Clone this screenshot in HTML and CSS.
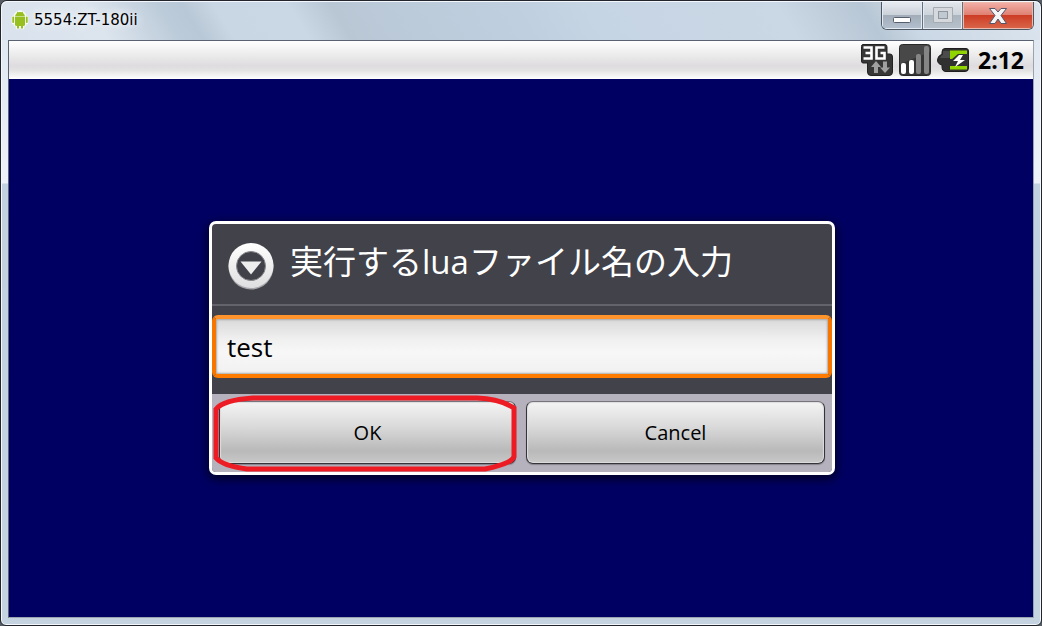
FILE: index.html
```html
<!DOCTYPE html>
<html lang="ja">
<head>
<meta charset="utf-8">
<title>5554:ZT-180ii</title>
<link rel="stylesheet" href="styles.css">
</head>
<body>
<div class="window">
  <header class="titlebar">
    <svg class="app-icon" viewBox="0 0 18 20" aria-hidden="true">
      <g fill="#f8fbf4" stroke="#f8fbf4" stroke-width="2.400" stroke-linejoin="round">
        <path d="M6 2.500Q9 .5 12 2.500L14 5V15H12V18H10.500V15.500H7.500V18H6V15H4V5Z"/>
        <path d="M2 7H3V13H2ZM15 7H16V13H15Z"/>
      </g>
      <g fill="#97bf20">
        <path d="M6 1.500 7 2.300Q9 1.800 11 2.300L12 1.500 12 3Q14 4.500 14 6.500H4Q4 4.500 6 3Z"/>
        <path d="M4 7H14V15Q14 16 12 16V18.500H10V16H8V18.500H6V16Q4 16 4 15Z"/>
        <rect x="1.300" y="6.500" width="1.800" height="6.500" rx=".9"/><rect x="14.900" y="6.500" width="1.800" height="6.500" rx=".9"/>
      </g>
    </svg>
    <h1 class="window-title">5554:ZT-180ii</h1>
    <div class="caption-buttons">
      <button class="caption minimize" type="button" aria-label="Minimize">
        <svg width="20" height="8" viewBox="0 0 20 8"><rect x="1.500" y="1.500" width="17" height="5" rx="1" fill="#fff" stroke="#565d6c"/></svg>
      </button>
      <button class="caption maximize" type="button" aria-label="Maximize" disabled>
        <svg width="20" height="17" viewBox="0 0 20 17"><path d="M.5.500H19.500V15.500H.5ZM5.500 4.500V11.500H14.500V4.500Z" fill="#d5d9de" fill-rule="evenodd" stroke="#a6abb2"/><rect x="5.500" y="4.500" width="9" height="7" fill="#c0c8d0" stroke="#8f969f"/></svg>
      </button>
      <button class="caption close" type="button" aria-label="Close">
        <svg width="20" height="16" viewBox="0 0 20 16"><path d="M1.500.500H7L10 4 13 .5H18.500L13 7.500 18.500 15.500H13L10 11 7 15.500H1.500L7 7.500Z" fill="#f5f5f6" stroke="#53566a" stroke-linejoin="round"/></svg>
      </button>
    </div>
  </header>
  <main class="screen">
    <div class="statusbar">
      <svg width="32" height="32" viewBox="0 0 32 32" role="img" aria-label="3G">
        <path d="M2 .5H24Q26 .5 26 3V10H29Q31.500 10 31.500 13V28Q31.500 31.500 28 31.500H10Q6.500 31.500 6.500 28V19H2Q.5 19 .5 17V2.500Q.5.500 2 .5Z" fill="#363636" stroke="#222"/>
        <path d="M2.500 3.500H10.500V14.500H2.500M4.500 9H10.500M23.500 3.500H15.500V14.500H23.500V9H19.500" fill="none" stroke="#fff" stroke-width="2.600"/>
        <path d="M15 17 20 23H17V29H13V23H10ZM24 29 19 23.500H22V17.500H26V23.500H29Z" fill="#a0a0a0"/>
      </svg>
      <svg width="32" height="32" viewBox="0 0 32 32" role="img" aria-label="Signal">
        <rect x=".5" y=".5" width="31" height="31" rx="3" fill="#484848" stroke="#292929"/>
        <path d="M1 31V20L31 8V29L29 31Z" fill="#353535"/>
        <rect x="2" y="19" width="5" height="11" rx="2" fill="#fff"/><rect x="10" y="16" width="5" height="14" rx="2" fill="#fff"/>
        <rect x="17" y="10" width="5" height="20" rx="2" fill="#858585"/><rect x="25" y="2" width="5" height="28" rx="2" fill="#858585"/>
      </svg>
      <svg width="32" height="24" viewBox="0 0 32 24" role="img" aria-label="Battery charging">
        <path d="M8 .5H29Q31.500.500 31.500 3V20Q31.500 23.500 28 23.500H9Q5 23.500 5 19V17Q.5 16 .5 12T5 6V4Q5 .5 8 .5Z" fill="#303030" stroke="#1e1e1e"/>
        <path d="M6 3H13V10H3Q4 7 6 7Z" fill="#4b4b4b"/>
        <path d="M13 2.500H30V6H21L15 11H13ZM14 18H30V21.500H13V18Z" fill="#91d500"/>
        <path d="M22 7 16 13H21L18 19 28 12H23L26 7Z" fill="#fff"/>
      </svg>
      <time class="clock">2:12</time>
    </div>
    <div class="stage">
      <form class="dialog" role="dialog" aria-labelledby="dialog-title">
        <div class="dialog-head">
          <svg width="48" height="48" viewBox="0 0 48 48" aria-hidden="true">
            <defs><linearGradient id="ring" x2="0" y2="1"><stop stop-color="#fff"/><stop offset="1" stop-color="#dedee0"/></linearGradient></defs>
            <circle cx="24" cy="25" r="22.500" fill="#a5a5aa"/>
            <circle cx="24" cy="23.500" r="22.500" fill="url(#ring)"/>
            <circle cx="24" cy="24" r="14.500" fill="#41414a" stroke="#88888d"/>
            <path d="M13.500 19.500H34.500L24 32.500Z" fill="#ededee"/>
          </svg>
          <h2 class="dialog-title" id="dialog-title">実行するluaファイル名の入力</h2>
        </div>
        <div class="dialog-body">
          <input class="filename" type="text" value="test" aria-labelledby="dialog-title">
        </div>
        <div class="dialog-actions">
          <div class="marked">
            <button class="action" type="button">OK</button>
            <svg class="marker" viewBox="0 0 304 76" preserveAspectRatio="none" aria-hidden="true">
              <path d="M40 3H264Q288 4 301 13V61Q298 68 272 73H34Q10 70 3 62V14Q10 5 40 3Z" fill="none" stroke="#ed1c24" stroke-width="5"/>
            </svg>
          </div>
          <button class="action" type="button">Cancel</button>
        </div>
      </form>
    </div>
  </main>
</div>
</body>
</html>
```
FILE: styles.css
```css
* { box-sizing: border-box; }

body {
  margin: 0;
  background: #555b63;
  font-family: "Open Sans", "Noto Sans", "Noto Sans CJK JP", sans-serif;
}

.window {
  display: flex;
  flex-direction: column;
  min-height: 100vh;
  padding: 0 7px 7px;
  border: 1px solid #22262c;
  border-radius: 7px 7px 6px 6px;
  background: linear-gradient(#dce5ef 0, #eef2f8 182px, #c2d1df 183px, #c5d3e1 100%);
  box-shadow: inset 0 0 0 1px #f4f8fc;
}

.titlebar {
  display: flex;
  align-items: flex-start;
  height: 39px;
  margin: 0 -6px;
  padding-left: 9px;
  border-radius: 6px 6px 0 0;
  border-top: 1px solid #f4f8fc;
  background: linear-gradient(58deg, #dae3ed 0, #dce5ee 10%, #bccbd9 17%, #b9c8d6 19%, #c9d6e4 22%, #cad7e4 29%, #b9c7d5 33%, #bccbda 40%, #c0cfdf 50%, #c6d5e4 57%, #cad7e5 75%, #b8c7d5 83%, #cbd8e5 87%, #dce5ee 100%);
}

.app-icon {
  width: 18px;
  height: 20px;
  margin-top: 8px;
}

.window-title {
  margin: 8px 0 0 5px;
  font: 15px/20px "DejaVu Sans", sans-serif;
  color: #000;
  text-shadow: 0 0 8px #fff, 0 0 12px #fff;
}

.caption-buttons {
  display: flex;
  height: 28px;
  margin-left: auto;
  margin-right: 6px;
  border: 1px solid #4e5865;
  border-top: 0;
  border-radius: 0 0 6px 6px;
  overflow: hidden;
}

.caption {
  display: flex;
  align-items: center;
  justify-content: center;
  width: 41px;
  padding: 0;
  border: 0;
  border-right: 1px solid #65707d;
  background: linear-gradient(#e8ebf2 0, #cbd1d9 48%, #a2adb9 50%, #b3c0cd 100%);
  box-shadow: inset 0 0 0 1px #e3eaf1;
}

.maximize {
  width: 40px;
  background: linear-gradient(#e2e6ec 0, #cdd3da 48%, #abb5bf 50%, #b7c2cd 100%);
}

.minimize { padding-top: 9px; }

.close {
  width: 70px;
  border: 0;
  background: linear-gradient(#f2b0a8 0, #df8072 48%, #cd3d26 50%, #d9674a 100%);
  box-shadow: inset 0 0 0 1px #eeb9ad;
}

.screen {
  flex: 1;
  display: flex;
  flex-direction: column;
  border: 1px solid #596371;
  border-right-color: #9ba3ae;
  border-bottom-color: #9ba3ae;
  background: #000063;
}

.statusbar {
  display: flex;
  align-items: center;
  justify-content: flex-end;
  gap: 6px;
  height: 38px;
  padding-right: 9px;
  background: linear-gradient(#fff 0, #dedcde 65%, #e4e3e4 78%, #fff 100%);
}

.clock {
  margin-left: 3px;
  font-size: 23px;
  font-weight: 700;
  line-height: 32px;
  color: #000;
}

.stage {
  flex: 1;
  display: flex;
  align-items: center;
  justify-content: center;
  padding: 16px 16px 16px 18px;
}

.dialog {
  width: 100%;
  max-width: 626px;
  border: 3px solid #fff;
  border-radius: 7px;
  background: #42424a;
  box-shadow: 0 3px 10px 2px #00002c;
}

.dialog-head {
  display: flex;
  align-items: center;
  gap: 15px;
  padding: 18px 15px 14px;
  border-bottom: 2px solid #63636b;
}

.dialog-head svg { flex: none; }

.dialog-title {
  margin: 0;
  padding-bottom: 8px;
  font-size: 33px;
  font-weight: 400;
  line-height: 40px;
  color: #fff;
}

.dialog-body { padding: 9px 0 16px; }

.filename {
  display: block;
  width: 100%;
  height: 63px;
  padding: 0 11px;
  border: 4px solid;
  border-color: #ff942c #f77600 #ff7b00;
  border-radius: 6px;
  outline: 0;
  background: linear-gradient(#d9d9d9 0, #efefef 35%, #f7f7f7 60%, #f1f1f1 100%);
  box-shadow: inset 0 0 2px 1px #aaa;
  font: 26px/36px "Open Sans", "Noto Sans", sans-serif;
  color: #000;
}

.dialog-actions {
  display: flex;
  gap: 10px;
  padding: 7px 7px 8px;
  border-radius: 0 0 4px 4px;
  background: #b5b2bd;
}

.marked {
  position: relative;
  flex: 1;
  display: flex;
}

.action {
  flex: 1;
  height: 63px;
  padding: 0;
  border: 1px solid #34343a;
  border-top-color: #77747d;
  border-radius: 7px;
  background: linear-gradient(#f4f4f4 0, #dadada 40%, #b9b9b9 80%, #c8c8c8 100%);
  box-shadow: inset 0 0 1px 1px #ddd, 0 1px 1px #85828c;
  font: 20px/28px "Open Sans", "Noto Sans", sans-serif;
  color: #000;
}

.marker {
  position: absolute;
  inset: -6px -1px -8px -6px;
  width: calc(100% + 7px);
  height: calc(100% + 14px);
  pointer-events: none;
}
```
